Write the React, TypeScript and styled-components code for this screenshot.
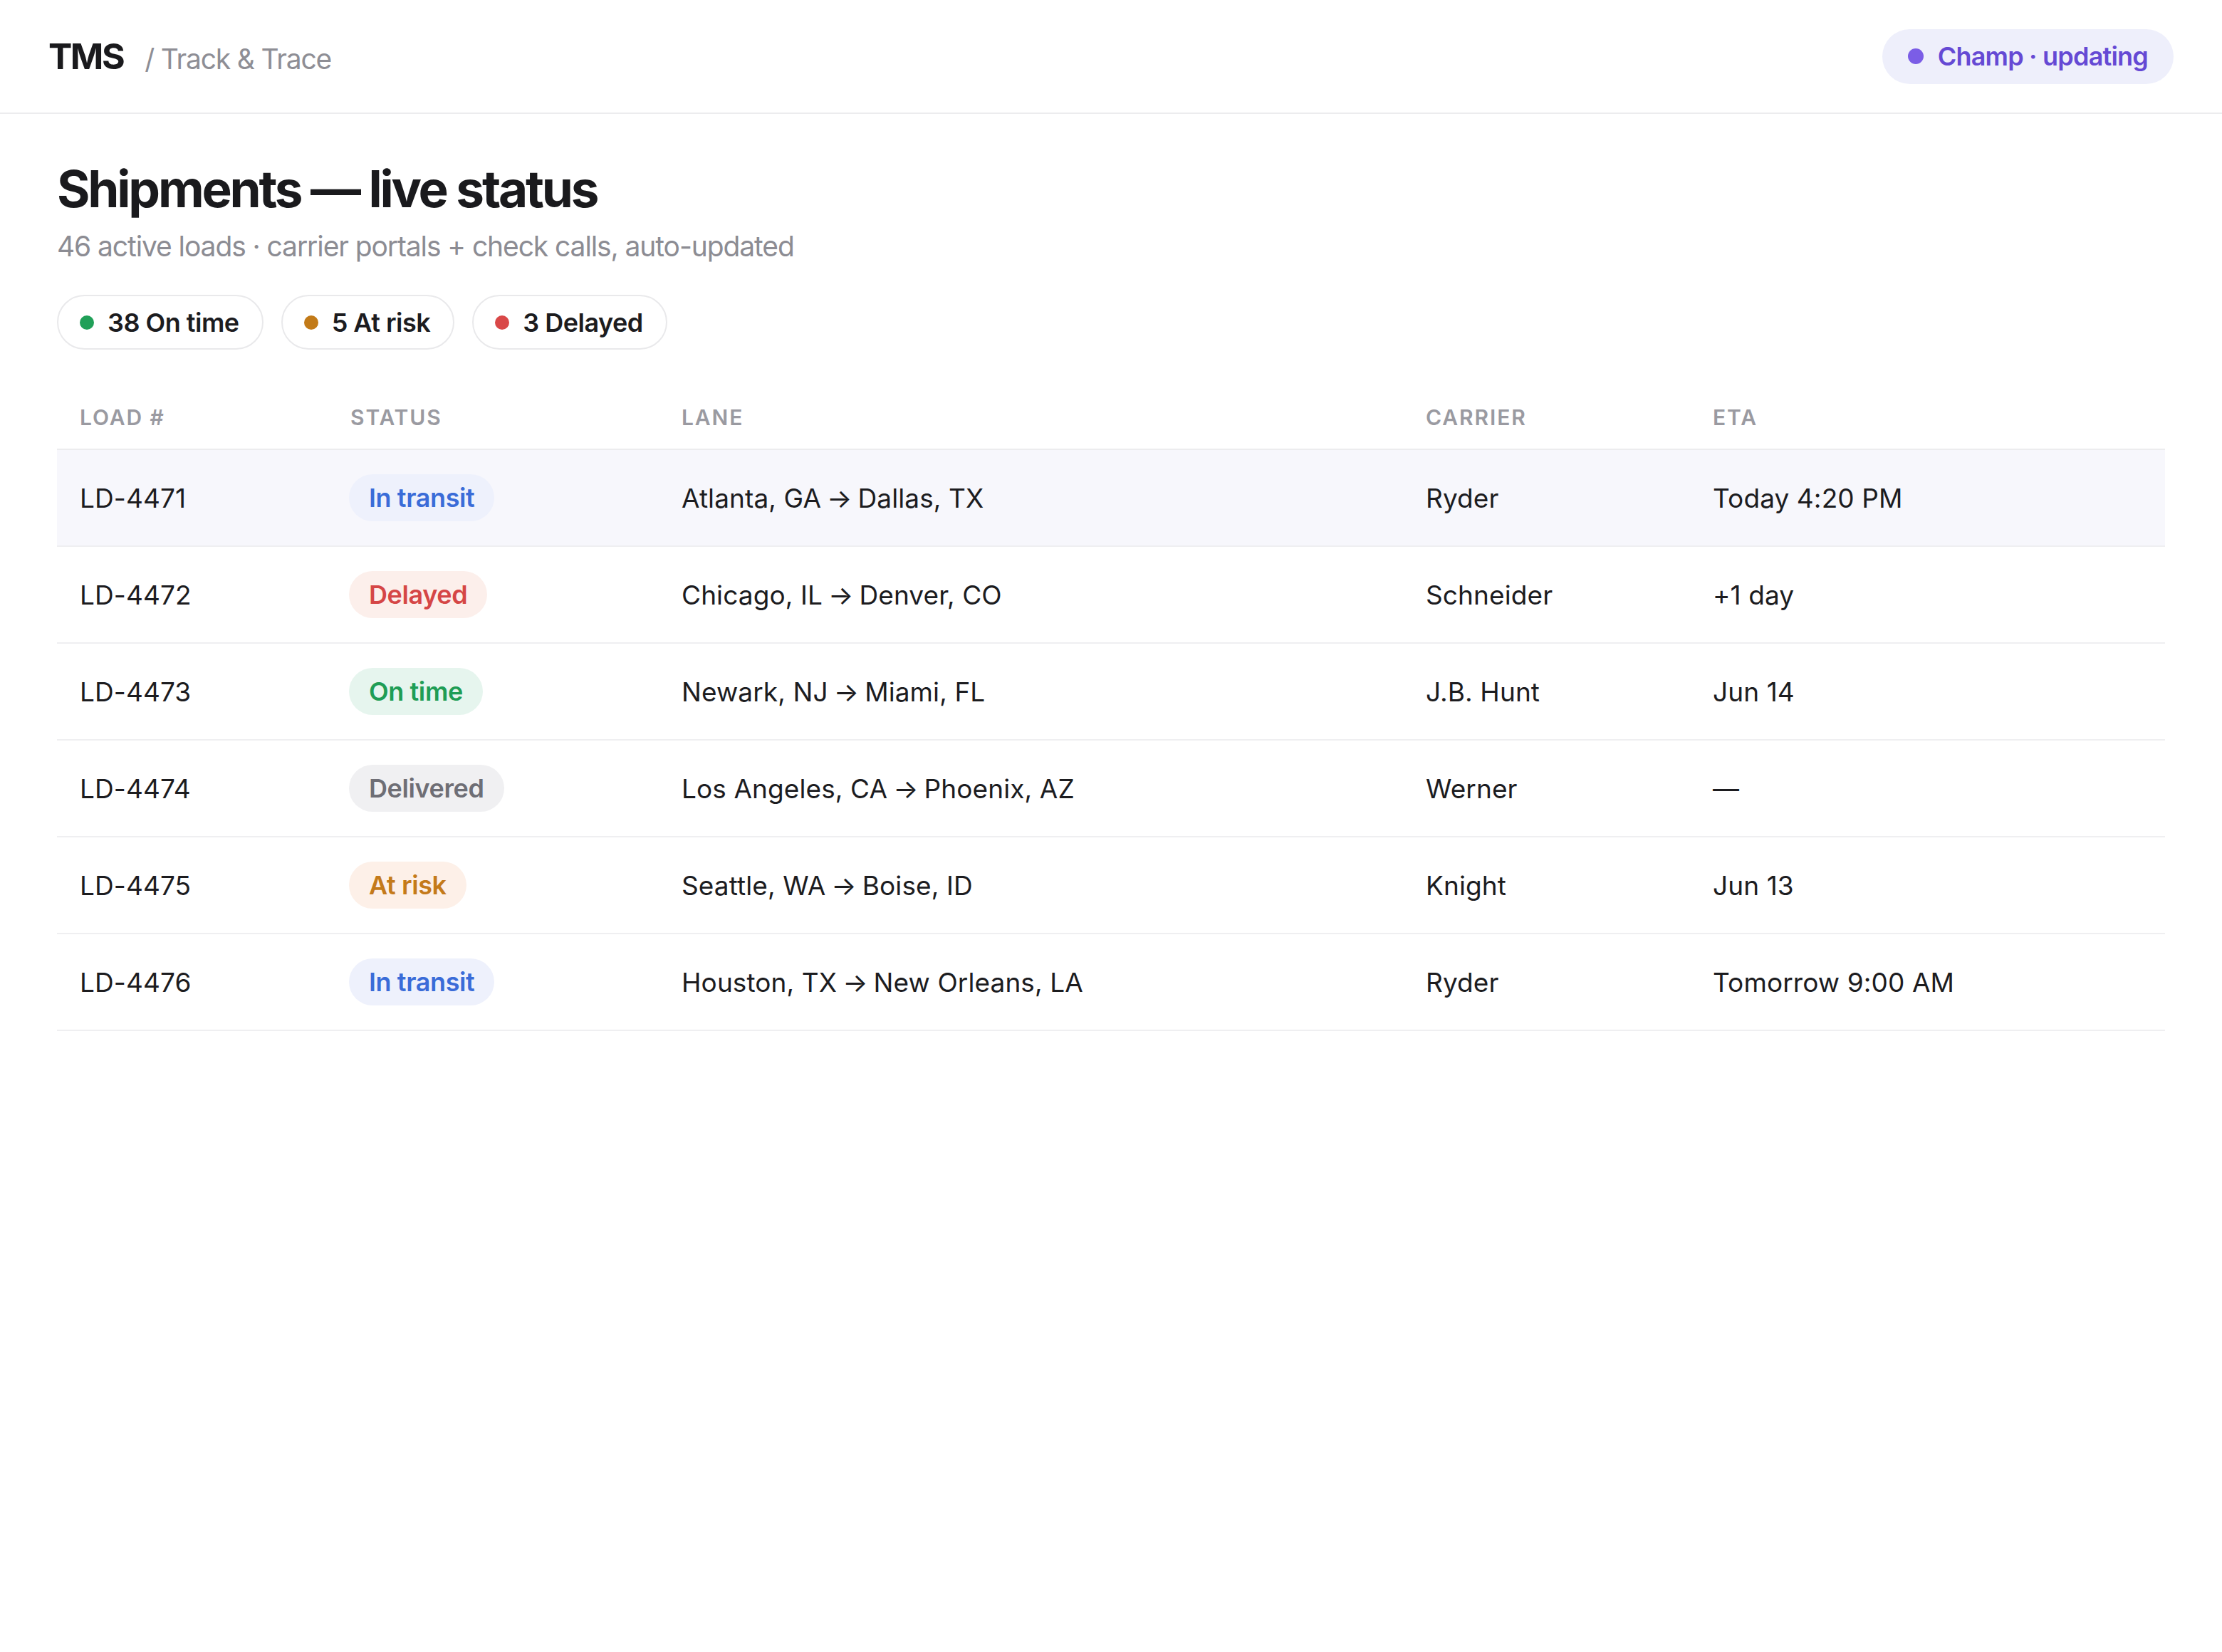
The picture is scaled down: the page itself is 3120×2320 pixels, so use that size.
import styled, { createGlobalStyle } from "styled-components";

const GlobalStyle = createGlobalStyle`
  html, body {
    margin: 0;
    padding: 0;
    background: #ffffff;
  }
  body {
    font-family: Inter, "Noto Sans", "Liberation Sans", sans-serif;
    color: #1d1d1f;
    -webkit-font-smoothing: antialiased;
  }
`;

type Tone = "blue" | "red" | "green" | "gray" | "amber";

const tones: Record<Tone, { fg: string; bg: string; dot: string }> = {
  blue: { fg: "#3a6cd8", bg: "#eef1fc", dot: "#3a6cd8" },
  red: { fg: "#d54646", bg: "#fcefeb", dot: "#d94848" },
  green: { fg: "#1f9d55", bg: "#e6f5ee", dot: "#20a058" },
  gray: { fg: "#6e6e75", bg: "#f0f0f2", dot: "#9a9aa2" },
  amber: { fg: "#c47a1a", bg: "#fdf0e8", dot: "#c27a18" },
};

const Page = styled.div`
  min-height: 100vh;
  background: #fff;
`;

const TopBar = styled.header`
  height: 158px;
  display: flex;
  align-items: center;
  justify-content: space-between;
  padding: 0 68px;
  border-bottom: 2px solid #ececee;
`;

const Brand = styled.div`
  display: flex;
  align-items: baseline;
  gap: 30px;
`;

const Logo = styled.span`
  font-size: 50px;
  font-weight: 700;
  letter-spacing: -2.5px;
  color: #1a1a1d;
`;

const Crumb = styled.span`
  font-size: 39px;
  color: #8e8e95;
  letter-spacing: -1.2px;
`;

const AgentPill = styled.div`
  display: flex;
  align-items: center;
  gap: 20px;
  height: 77px;
  padding: 0 36px;
  border-radius: 999px;
  background: #eeeffb;
  color: #6549d4;
  font-size: 36px;
  font-weight: 600;
  letter-spacing: -0.8px;
`;

const Dot = styled.span<{ $color: string; $size?: number }>`
  width: ${(p) => p.$size ?? 20}px;
  height: ${(p) => p.$size ?? 20}px;
  border-radius: 50%;
  background: ${(p) => p.$color};
  flex-shrink: 0;
`;

const Main = styled.main`
  padding: 62px 80px 0 80px;
`;

const Title = styled.h1`
  margin: 0;
  font-size: 71px;
  line-height: 86px;
  font-weight: 700;
  letter-spacing: -3.2px;
  color: #1a1a1d;
`;

const Subtitle = styled.p`
  margin: 12px 0 0;
  font-size: 39px;
  line-height: 52px;
  color: #8c8c93;
  letter-spacing: -1.1px;
`;

const Chips = styled.div`
  display: flex;
  gap: 25px;
  margin-top: 42px;
`;

const Chip = styled.div`
  display: flex;
  align-items: center;
  gap: 19px;
  height: 77px;
  box-sizing: border-box;
  padding: 0 32px 0 30px;
  border: 2px solid #e9e9eb;
  border-radius: 999px;
  font-size: 36px;
  font-weight: 600;
  color: #1c1c1f;
  letter-spacing: -0.5px;
`;

const Table = styled.table`
  width: 100%;
  margin-top: 51px;
  border-collapse: collapse;
  table-layout: fixed;
`;

const HeadCell = styled.th`
  text-align: left;
  height: 88px;
  padding: 0 32px;
  font-size: 30px;
  line-height: 36px;
  font-weight: 600;
  letter-spacing: 1.9px;
  text-transform: uppercase;
  color: #9a9aa1;
  border-bottom: 2px solid #ececee;
  vertical-align: middle;
`;

const Row = styled.tr<{ $active?: boolean }>`
  background: ${(p) => (p.$active ? "#f7f7fc" : "transparent")};
`;

const Cell = styled.td`
  height: 134px;
  padding: 0 32px;
  font-size: 37px;
  color: #1c1c1f;
  letter-spacing: 0.1px;
  border-bottom: 2px solid #efeff1;
  vertical-align: middle;
  white-space: nowrap;
`;

const Badge = styled.span<{ $tone: Tone }>`
  display: inline-flex;
  align-items: center;
  height: 66px;
  padding: 0 28px;
  margin-left: -2px;
  border-radius: 999px;
  font-size: 36px;
  font-weight: 600;
  letter-spacing: -0.4px;
  color: ${(p) => tones[p.$tone].fg};
  background: ${(p) => tones[p.$tone].bg};
`;

const Arrow = styled.span`
  margin: 0 8px;
`;

type Shipment = {
  id: string;
  status: string;
  tone: Tone;
  from: string;
  to: string;
  carrier: string;
  eta: string;
};

const shipments: Shipment[] = [
  { id: "LD-4471", status: "In transit", tone: "blue", from: "Atlanta, GA", to: "Dallas, TX", carrier: "Ryder", eta: "Today 4:20 PM" },
  { id: "LD-4472", status: "Delayed", tone: "red", from: "Chicago, IL", to: "Denver, CO", carrier: "Schneider", eta: "+1 day" },
  { id: "LD-4473", status: "On time", tone: "green", from: "Newark, NJ", to: "Miami, FL", carrier: "J.B. Hunt", eta: "Jun 14" },
  { id: "LD-4474", status: "Delivered", tone: "gray", from: "Los Angeles, CA", to: "Phoenix, AZ", carrier: "Werner", eta: "—" },
  { id: "LD-4475", status: "At risk", tone: "amber", from: "Seattle, WA", to: "Boise, ID", carrier: "Knight", eta: "Jun 13" },
  { id: "LD-4476", status: "In transit", tone: "blue", from: "Houston, TX", to: "New Orleans, LA", carrier: "Ryder", eta: "Tomorrow 9:00 AM" },
];

const summary: { label: string; tone: Tone }[] = [
  { label: "38 On time", tone: "green" },
  { label: "5 At risk", tone: "amber" },
  { label: "3 Delayed", tone: "red" },
];

const columns = [
  { label: "Load #", width: 380 },
  { label: "Status", width: 465 },
  { label: "Lane", width: 1045 },
  { label: "Carrier", width: 403 },
  { label: "ETA", width: 667 },
];

export default function App() {
  return (
    <Page>
      <GlobalStyle />
      <TopBar>
        <Brand>
          <Logo>TMS</Logo>
          <Crumb>/ Track &amp; Trace</Crumb>
        </Brand>
        <AgentPill>
          <Dot $color="#7b5de6" $size={22} />
          Champ · updating
        </AgentPill>
      </TopBar>

      <Main>
        <Title>Shipments — live status</Title>
        <Subtitle>46 active loads · carrier portals + check calls, auto-updated</Subtitle>

        <Chips>
          {summary.map((s) => (
            <Chip key={s.label}>
              <Dot $color={tones[s.tone].dot} />
              {s.label}
            </Chip>
          ))}
        </Chips>

        <Table>
          <colgroup>
            {columns.map((c) => (
              <col key={c.label} style={{ width: c.width }} />
            ))}
          </colgroup>
          <thead>
            <tr>
              {columns.map((c) => (
                <HeadCell key={c.label}>{c.label}</HeadCell>
              ))}
            </tr>
          </thead>
          <tbody>
            {shipments.map((s, idx) => (
              <Row key={s.id} $active={idx === 0}>
                <Cell>{s.id}</Cell>
                <Cell>
                  <Badge $tone={s.tone}>{s.status}</Badge>
                </Cell>
                <Cell>
                  {s.from}
                  <Arrow>→</Arrow>
                  {s.to}
                </Cell>
                <Cell>{s.carrier}</Cell>
                <Cell>{s.eta}</Cell>
              </Row>
            ))}
          </tbody>
        </Table>
      </Main>
    </Page>
  );
}
